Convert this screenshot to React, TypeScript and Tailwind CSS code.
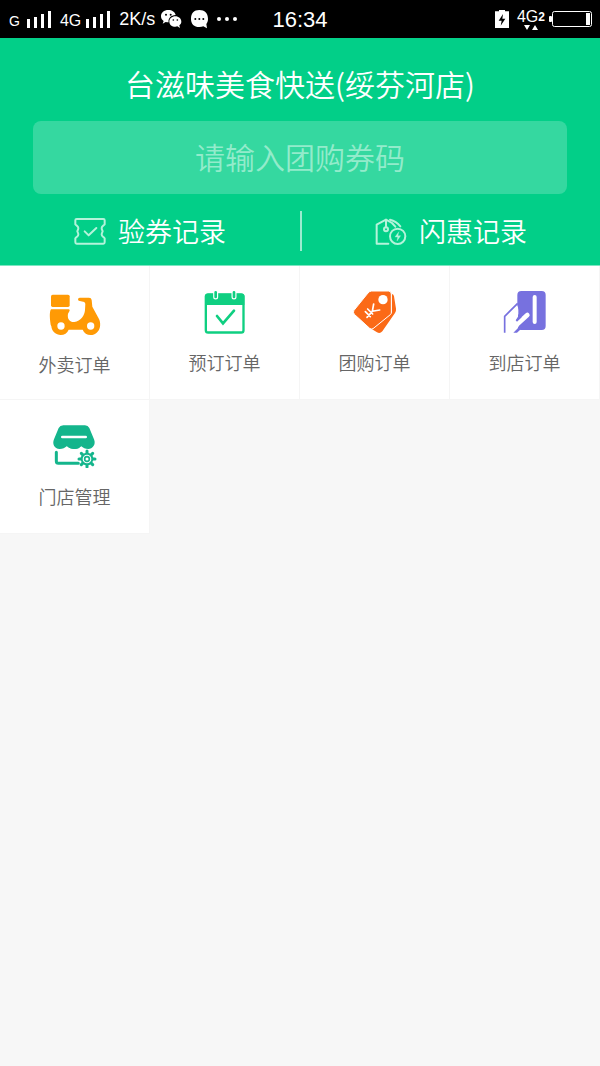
import type { ReactNode } from 'react';

function SignalBars() {
  return (
    <svg className="h-[18px] w-6 shrink-0" viewBox="0 0 24 18" fill="currentColor">
      <rect x="0" y="9" width="3" height="9" />
      <rect x="7" y="7" width="3" height="11" />
      <rect x="14" y="4" width="3" height="14" />
      <rect x="21" y="1" width="3" height="17" />
    </svg>
  );
}

function StatusBar() {
  return (
    <div className="grid h-[38px] grid-cols-[1fr_auto_1fr] items-center bg-black font-['Liberation_Sans',sans-serif] text-white">
      <div className="flex items-center pl-[9px]">
        <span className="pt-1 text-sm leading-5">G</span>
        <span className="ml-[7px]"><SignalBars /></span>
        <span className="ml-[9px] pt-1 text-base leading-5">4G</span>
        <span className="ml-[5px]"><SignalBars /></span>
        <span className="ml-[9px] text-lg leading-5">2K/s</span>
        <svg className="ml-[5px] h-5 w-[22px] shrink-0" viewBox="0 0 66 60" fill="none">
          <path fill="#fff" d="M25 3C12 3 3 11 3 22c0 6 3 11 8 14l-3 8 9-5c3 1 6 1 9 1-3-11 7-22 21-22C45 9 36 3 25 3z" />
          <path fill="#fff" d="M46 22c-10 0-18 7-18 16s8 15 18 15c2 0 4 0 6-1l8 5-2-8c4-3 6-7 6-11 0-9-8-16-18-16z" />
          <g fill="#000">
            <circle cx="18" cy="17" r="3" />
            <circle cx="32" cy="17" r="3" />
            <circle cx="40" cy="33" r="2.500" />
            <circle cx="52" cy="33" r="2.500" />
          </g>
        </svg>
        <svg className="ml-2 h-5 w-[19px] shrink-0" viewBox="0 0 57 60">
          <path fill="#fff" d="M28 3C12 3 3 13 3 29s9 25 25 25c5 0 9-1 12-2l11 6-2-13c3-4 5-9 5-16C54 13 44 3 28 3z" />
          <g fill="#000">
            <circle cx="16" cy="30" r="3" />
            <circle cx="28" cy="30" r="3" />
            <circle cx="40" cy="30" r="3" />
          </g>
        </svg>
        <svg className="ml-2 h-1 w-5 shrink-0" viewBox="0 0 20 4" fill="currentColor">
          <circle cx="2" cy="2" r="2" />
          <circle cx="10" cy="2" r="2" />
          <circle cx="18" cy="2" r="2" />
        </svg>
      </div>
      <time className="pt-px text-[22px] leading-6">16:34</time>
      <div className="flex items-center justify-end pr-2">
        <svg className="h-[18px] w-[14px] shrink-0" viewBox="0 0 42 54">
          <path fill="#fff" d="M12 0h18v4h12v50H0V4h12z" />
          <path fill="#000" d="M24 12 11 32h9l-3 15 14-21h-9z" />
        </svg>
        <div className="ml-2 flex flex-col items-center">
          <span className="flex items-end text-base leading-4">
            4G<b className="text-xs leading-4">2</b>
          </span>
          <svg className="h-[5px] w-[14px]" viewBox="0 0 14 5" fill="currentColor">
            <path d="M0 0h6L3 5zM8 5h6l-3-5z" />
          </svg>
        </div>
        <svg className="ml-1 h-[18px] w-[43px] shrink-0" viewBox="0 0 43 18" fill="none">
          <rect x="0" y="6" width="3" height="6" rx="1" fill="#fff" />
          <rect x="3.500" y="1.500" width="39" height="15" rx="2" stroke="#fff" />
          <rect x="37" y="3" width="4" height="12" fill="#fff" />
        </svg>
      </div>
    </div>
  );
}

function CouponIcon() {
  return (
    <svg className="h-[27px] w-8" viewBox="0 0 96 81" fill="none" stroke="#b4f3da" strokeWidth="6" strokeLinejoin="round" strokeLinecap="round">
      <path d="M8 3h80q4 0 4 4v12c-4 4-9 7-9 11 0 6 3 8 3 10s-3 4-3 10c0 4 5 7 9 11v12q0 4-4 4H8q-4 0-4-4V61c4-4 9-7 9-11 0-6-3-8-3-10s3-4 3-10c0-4-5-7-9-11V7q0-4 4-4z" />
      <path d="m32 40 12 12 23-22" />
    </svg>
  );
}

function FlashTagIcon() {
  return (
    <svg className="h-[27px] w-8" viewBox="0 0 96 81" fill="none" stroke="#b4f3da" strokeWidth="6" strokeLinejoin="round" strokeLinecap="round">
      <path d="M40 77H5V20L33 5l18 10 10 11" />
      <path d="M45 5c12 3 23 10 31 20" />
      <path d="M33 5v23" />
      <circle cx="33" cy="34" r="6" />
      <circle cx="68" cy="55" r="23" />
      <path d="M71 42 60 57h8l-2 12 11-16h-8z" fill="#b4f3da" strokeWidth="1" />
    </svg>
  );
}

function ScooterIcon() {
  return (
    <svg className="h-[46px] w-[52px]" viewBox="148 78 156 138" fill="#ff9a05">
      <rect x="154" y="92" width="56" height="37" rx="5" />
      <path d="M157 136h50q3 0 3 4l-5 9c-3 16 6 26 19 25 19-2 31-20 32-36l1-19-3-5-17-4q-5-7 3-9h28q7 0 8 7l2 20 20 37c4 7 4 17 3 23-3 15-14 25-28 25-11 0-20-6-24-16h-42c-4 10-13 16-24 16-14 0-27-11-28-26l-2-5c-2-13-5-38 1-46z" />
      <circle cx="184" cy="186" r="11" fill="#fff" />
      <circle cx="273" cy="186" r="11" fill="#fff" />
    </svg>
  );
}

function CalendarIcon() {
  return (
    <svg className="h-11 w-[42px]" viewBox="160 78 126 132" fill="none">
      <rect x="165.500" y="91.500" width="113" height="114" rx="7" stroke="#0fcf81" strokeWidth="7" />
      <path fill="#0fcf81" d="M163 97q0-8 8-8h102q8 0 8 8v26H163z" />
      <path d="M195 85v14M250 85v14" stroke="#fff" strokeWidth="15" strokeLinecap="round" />
      <path d="M195 85v14M250 85v14" stroke="#0fcf81" strokeWidth="8" strokeLinecap="round" />
      <path d="m199 156 18 22 33-38" stroke="#0fcf81" strokeWidth="8" strokeLinecap="round" />
    </svg>
  );
}

function PriceTagIcon() {
  return (
    <svg className="h-11 w-11" viewBox="160 78 132 132" fill="none">
      <path fill="#fb6a17" d="M277 90q5 1 6 7l6 37q1 7-3 13l-38 55q-7 8-16 3l-16-10 61-49z" />
      <path fill="#fb6a17" stroke="#fff" strokeWidth="3" d="M216 81h50q9 0 9 9v55q0 4-3 7l-52 42q-5 3-10-1l-46-42q-5-6-1-12l42-52q5-6 11-6z" />
      <circle cx="250" cy="107" r="14" fill="#fff" />
      <path d="m222 120-4 22 22-4M218 142l-16 18M197 143l15 15M204 135l15 15" stroke="#fff" strokeWidth="5" strokeLinecap="round" />
    </svg>
  );
}

function CardHandIcon() {
  return (
    <svg className="h-11 w-11" viewBox="160 78 132 132" fill="none">
      <rect x="203" y="81" width="85" height="117" rx="12" fill="#7771df" />
      <path d="M255 99v75" stroke="#fff" strokeWidth="12" strokeLinecap="round" />
      <path fill="#fff" d="M167 158l34-34q5 4 5 14v20l-5 10 12 4-6 14-9 20h-31z" />
      <path d="M233 153l-33 30" stroke="#fff" strokeWidth="14" strokeLinecap="round" />
      <path fill="#7771df" d="M205 150v8l-7 11 4 4 14-13zM224 176l-16 13-17 17h11l13-12z" />
      <path d="M165 206v-49l39-39" stroke="#7771df" strokeWidth="5" />
    </svg>
  );
}

function StoreIcon() {
  return (
    <svg className="h-11 w-[45px]" viewBox="156 93 135 132" fill="none">
      <path fill="#14b58c" d="M190 97h65q9 0 13 8l14 34c7 16-5 29-17 29-9 0-16-3-21-8-6 10-30 11-44 0-5 5-12 8-21 8-16 0-23-15-17-29l14-34q4-8 14-8z" />
      <path fill="#fff" d="M197 165q4-8 9 0l-4 4h-2zM238 165q4-8 9 0l-4 4h-2z" />
      <path d="M187 132h70" stroke="#fff" strokeWidth="8" strokeLinecap="round" />
      <path fill="#14b58c" d="M203 161q19 14 38 0z" />
      <path d="M169 178v27q0 6 6 6h60" stroke="#14b58c" strokeWidth="9" strokeLinecap="round" strokeLinejoin="round" />
      <path d="M261 174v48M237 198h48M244 181l34 34M244 215l34-34" stroke="#14b58c" strokeWidth="9" strokeLinecap="round" />
      <circle cx="261" cy="198" r="16" fill="#fff" stroke="#14b58c" strokeWidth="6" />
      <circle cx="261" cy="198" r="7" stroke="#14b58c" strokeWidth="5" />
    </svg>
  );
}

const tiles: { label: string; icon: ReactNode }[] = [
  { label: '外卖订单', icon: <ScooterIcon /> },
  { label: '预订订单', icon: <CalendarIcon /> },
  { label: '团购订单', icon: <PriceTagIcon /> },
  { label: '到店订单', icon: <CardHandIcon /> },
  { label: '门店管理', icon: <StoreIcon /> },
];

export default function App() {
  return (
    <div className="min-h-screen bg-[#f7f7f7] font-['Noto_Sans_CJK_SC',sans-serif]">
      <StatusBar />

      <header className="border-b border-[#7ce6c2] bg-[#02cf88] pb-[14px] pt-[27px] text-white">
        <h1 className="text-center text-[30px] font-[350] leading-9">台滋味美食快送(绥芬河店)</h1>
        <div className="mt-5 px-[33px]">
          <input
            type="text"
            aria-label="请输入团购券码"
            placeholder="请输入团购券码"
            className="block h-[73px] w-full rounded-lg bg-[#35d8a0] pb-[3px] text-center text-[30px] font-[350] text-white outline-none placeholder:text-[#93ebcb]"
          />
        </div>
        <nav className="mt-[17px] grid grid-cols-2 text-[27px] font-[350] leading-10">
          <a href="#coupons" className="flex items-center justify-center gap-3">
            <CouponIcon />
            验券记录
          </a>
          <a href="#flash" className="flex items-center justify-center gap-3 border-l-2 border-[#9aeccf]">
            <FlashTagIcon />
            闪惠记录
          </a>
        </nav>
      </header>

      <main className="grid grid-cols-4">
        {tiles.map((tile) => (
          <a
            key={tile.label}
            href="#orders"
            className="flex h-[134px] flex-col items-center gap-4 border-b border-r border-[#f5f5f5] bg-white pt-6 text-lg font-[350] leading-6 text-[#666]"
          >
            {tile.icon}
            {tile.label}
          </a>
        ))}
      </main>
    </div>
  );
}
